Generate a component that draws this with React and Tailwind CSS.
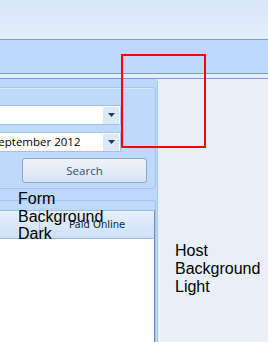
import { useState } from 'react';

function Dropdown({ value, top }) {
  return (
    <div
      className={`relative ml-[-8px] flex h-[20px] w-[134px] items-center border border-[#a7c0e0] bg-white ${top}`}
    >
      <span className="ml-[4px] flex-1 truncate text-[11.5px] leading-none text-black">{value}</span>
      <div className="mr-[1px] flex h-[17px] w-[16px] items-center justify-center bg-[#dde8f7]">
        <svg width="7" height="4" viewBox="0 0 7 4">
          <path d="M0 0h7L3.5 4z" fill="#1f3c6c" />
        </svg>
      </div>
    </div>
  );
}

export default function App() {
  const [period] = useState('September 2012');

  return (
    <div
      className="relative flex h-[342px] w-[268px] flex-col overflow-hidden bg-[#e8eff9]"
      style={{ fontFamily: '"Open Sans", "Noto Sans", sans-serif' }}
    >
      {/* ribbon area */}
      <div className="h-[39px] bg-gradient-to-b from-[#d9e6f7] to-[#e4effd]" />
      <div className="h-[35px] border-y border-[#7a9ed3] bg-[#bcd9fb]" />
      <div className="h-[4px] bg-[#e6eefa]" />
      <div className="h-[1px] bg-[#7a9ed3]" />

      <div className="flex flex-1">
        {/* form panel */}
        <div className="flex w-[158px] flex-col overflow-hidden rounded-tr-[4px] border-r border-[#a8c6ee] bg-[#bdd8fa]">
          <div className="mt-[8px] mr-[1px] ml-[-6px] flex h-[102px] flex-col rounded-[3px] border border-[#a3c4ee] bg-[#bfd9fb] shadow-[inset_1px_1px_0_#d9e8fc]">
            <Dropdown value="" top="mt-[17px]" />
            <Dropdown value={period} top="mt-[7px]" />
            <button className="mt-[6px] ml-[27px] flex h-[25px] w-[125px] items-center justify-center rounded-[3px] border border-[#8ea6c6] bg-gradient-to-b from-[#eef3fb] via-[#e4ecf8] to-[#d7e3f3] text-[11.5px] leading-none text-[#2f4f82]">
              Search
            </button>
          </div>

          <div className="mt-[11px] mr-[1px] ml-[-6px] flex flex-1 flex-col rounded-t-[3px] border border-b-0 border-[#a3c4ee] bg-[#bfd9fb] pt-[9px]">
            <div className="flex flex-1 flex-col border border-r-[#6f8fc0] border-l-0 border-t-[#9dbbe3] border-b-0 bg-white">
              <div className="flex h-[28px] border-b border-[#9dbbe3] bg-gradient-to-b from-[#e7f0fc] to-[#cde0f7]">
                <div className="w-[45px] border-r border-[#b3cbe9]" />
                <div
                  className="flex flex-1 items-center pl-[29px] text-[10px] leading-none text-[#0f1e4a]"
                  style={{ fontFamily: '"DejaVu Sans", sans-serif' }}
                >
                  Paid Online
                </div>
              </div>
              <div className="flex-1" />
            </div>
          </div>
        </div>

        {/* host */}
        <div className="flex-1 bg-[#e8eff9]" />
      </div>

      {/* overlay labels */}
      <div
        className="absolute top-[190px] left-[18px] text-[16px] leading-[17.6px] text-black"
        style={{ fontFamily: '"Liberation Sans", Arial, sans-serif' }}
      >
        Form
        <br />
        Background
        <br />
        Dark
      </div>
      <div
        className="absolute top-[242px] left-[175px] text-[16px] leading-[18px] text-black"
        style={{ fontFamily: '"Liberation Sans", Arial, sans-serif' }}
      >
        Host
        <br />
        Background
        <br />
        Light
      </div>

      {/* red highlight */}
      <div className="absolute top-[54px] left-[121px] h-[94px] w-[85px] border-2 border-[#ff0000]" />
    </div>
  );
}
